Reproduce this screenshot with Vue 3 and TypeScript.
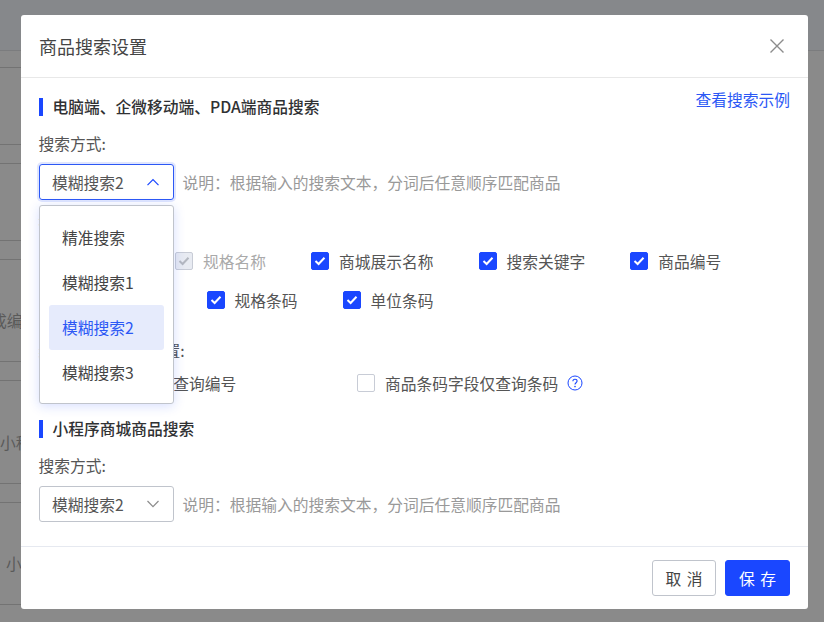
<script setup lang="ts">
interface BgRow {
  height: number
  text?: string
  offset?: number
}

interface CheckItem {
  label: string
  checked: boolean
  disabled?: boolean
}

const bgRows: BgRow[] = [
  { height: 17 },
  { height: 77 },
  { height: 19 },
  { height: 77 },
  { height: 19 },
  { height: 102, text: '成编码', offset: -9 },
  { height: 19 },
  { height: 103, text: '小程序', offset: 0 },
  { height: 19 },
  { height: 102, text: '小程序', offset: 6 },
]

const options = ['精准搜索', '模糊搜索1', '模糊搜索2', '模糊搜索3']
const description = '说明：根据输入的搜索文本，分词后任意顺序匹配商品'

const fields: CheckItem[] = [
  { label: '商品名称', checked: true, disabled: true },
  { label: '规格名称', checked: true, disabled: true },
  { label: '商城展示名称', checked: true },
  { label: '搜索关键字', checked: true },
  { label: '商品编号', checked: true },
  { label: '商品规格型号', checked: true },
  { label: '规格条码', checked: true },
  { label: '单位条码', checked: true },
]
</script>

<template>
  <div class="page">
    <div class="page-top"></div>
    <div class="page-table">
      <div
        v-for="(row, index) in bgRows"
        :key="index"
        class="page-row"
        :class="{ 'has-text': row.text }"
        :style="{ height: row.height + 'px' }"
      >
        <span v-if="row.text" :style="{ marginLeft: row.offset + 'px' }">{{ row.text }}</span>
      </div>
    </div>

    <div class="modal">
      <header class="modal-header">
        <span class="modal-title">商品搜索设置</span>
        <svg class="close" width="16" height="16" viewBox="0 0 16 16">
          <path d="M1.5 1.5 14.5 14.5M14.5 1.5 1.5 14.5" stroke="#8c8c8c" stroke-width="1.4" fill="none" />
        </svg>
      </header>

      <div class="modal-body">
        <div class="heading-row">
          <h3 class="heading">电脑端、企微移动端、PDA端商品搜索</h3>
          <a class="example-link">查看搜索示例</a>
        </div>

        <div class="form-label first">搜索方式:</div>
        <div class="select-row">
          <div class="select-wrap">
            <div class="select active">
              <span>模糊搜索2</span>
              <svg width="14" height="8" viewBox="0 0 14 8">
                <path d="M1.5 7.2 7 1.5l5.5 5.7" stroke="#1a47ff" stroke-width="1.2" fill="none" />
              </svg>
            </div>
            <ul class="dropdown">
              <li
                v-for="opt in options"
                :key="opt"
                class="option"
                :class="{ selected: opt === '模糊搜索2' }"
              >
                {{ opt }}
              </li>
            </ul>
          </div>
          <span class="desc">{{ description }}</span>
        </div>

        <div class="form-label fields-label">搜索字段:</div>
        <div class="check-group">
          <label
            v-for="item in fields"
            :key="item.label"
            class="check"
            :class="{ disabled: item.disabled }"
          >
            <span class="box on">
              <svg width="12" height="10" viewBox="0 0 12 10">
                <path d="M1.5 5 4.6 8 10.5 1.8" stroke="currentColor" stroke-width="2" fill="none" />
              </svg>
            </span>
            {{ item.label }}
          </label>
        </div>

        <div class="form-label rule-label">编号和条码查询设置:</div>
        <div class="rule-row">
          <label class="check rule-first">
            <span class="box"></span>
            商品编号字段仅查询编号
          </label>
          <label class="check">
            <span class="box"></span>
            商品条码字段仅查询条码
          </label>
          <svg class="help" width="16" height="16" viewBox="0 0 16 16">
            <circle cx="8" cy="8" r="7" stroke="#1a47ff" stroke-width="1" fill="none" />
            <path d="M5.9 6.2C5.9 5 6.8 4.2 8 4.2s2.1.8 2.1 1.9c0 1.7-2.1 1.6-2.1 3.4" stroke="#1a47ff" stroke-width="1.1" fill="none" />
            <circle cx="8" cy="11.6" r=".8" fill="#1a47ff" />
          </svg>
        </div>

        <h3 class="heading second">小程序商城商品搜索</h3>
        <div class="form-label first">搜索方式:</div>
        <div class="select-row">
          <div class="select">
            <span>模糊搜索2</span>
            <svg width="14" height="8" viewBox="0 0 14 8">
              <path d="M1.5 1 7 6.7 12.5 1" stroke="#8c8c8c" stroke-width="1.2" fill="none" />
            </svg>
          </div>
          <span class="desc">{{ description }}</span>
        </div>
      </div>

      <footer class="modal-footer">
        <button class="btn">取 消</button>
        <button class="btn primary">保 存</button>
      </footer>
    </div>
  </div>
</template>

<style>
html,
body {
  margin: 0;
  background: #8a8a8a;
}
</style>

<style scoped>
.page {
  position: relative;
  width: 824px;
  height: 622px;
  overflow: hidden;
  background: #8a8a8a;
  color: #333;
  font-family: "Noto Sans CJK SC", "Noto Sans", sans-serif;
  font-size: 15.75px;
}

.page-top {
  height: 51px;
  background: #86888b;
  border-bottom: 1px solid #7b7c7e;
  box-sizing: border-box;
}

.page-table {
  width: 120px;
}

.page-row {
  box-sizing: border-box;
  display: flex;
  align-items: center;
  border-bottom: 1px solid #737373;
  color: #5a5a5a;
  white-space: nowrap;
}

.page-row.has-text {
  padding-top: 20px;
}

.modal {
  position: absolute;
  left: 21px;
  top: 15px;
  width: 787px;
  height: 594px;
  display: flex;
  flex-direction: column;
  background: #fff;
  border-radius: 3px;
}

.modal-header {
  height: 63px;
  box-sizing: border-box;
  flex-shrink: 0;
  display: flex;
  align-items: center;
  justify-content: space-between;
  padding: 0 23px 0 18px;
  border-bottom: 1px solid #e8e8e8;
}

.modal-title {
  font-size: 18px;
  color: #444;
}

.modal-body {
  flex: 1;
  padding: 20px 18px 0;
  min-height: 0;
}

.heading-row {
  display: flex;
  justify-content: space-between;
  align-items: flex-start;
}

.heading {
  margin: 0;
  height: 18px;
  line-height: 18px;
  padding-left: 9.5px;
  border-left: 4px solid #1a47ff;
  font-size: 15.75px;
  font-weight: 500;
  color: #303133;
}

.heading.second {
  margin-top: 26px;
}

.example-link {
  margin-top: -9px;
  line-height: 22px;
  color: #2c58f5;
}

.form-label {
  height: 22px;
  line-height: 22px;
  color: #555;
  text-indent: -0.5px;
}

.form-label.first {
  margin-top: 17px;
}

.fields-label {
  margin-top: 12px;
}

.rule-label {
  margin-top: 29px;
}

.select-row {
  display: flex;
  align-items: center;
  gap: 9px;
  margin-top: 9px;
}

.select-wrap {
  position: relative;
}

.select {
  width: 135px;
  height: 36px;
  box-sizing: border-box;
  display: flex;
  align-items: center;
  justify-content: space-between;
  padding: 0 13px 0 12px;
  border: 1px solid #c0c4cc;
  border-radius: 3px;
  color: #555;
}

.select.active {
  border-color: #2c58f5;
  box-shadow: 0 0 0 2px rgba(44, 88, 245, 0.15);
}

.dropdown {
  position: absolute;
  z-index: 2;
  left: 0;
  top: 41px;
  width: 135px;
  height: 199px;
  box-sizing: border-box;
  margin: 0;
  padding: 9px;
  list-style: none;
  background: #fff;
  border: 1px solid #c0c4cc;
  border-radius: 3px;
  box-shadow: 0 2px 12px rgba(26, 71, 255, 0.18);
}

.option {
  height: 45px;
  line-height: 45px;
  padding-left: 13px;
  border-radius: 3px;
  color: #444;
}

.option.selected {
  background: #e6ebfc;
  color: #2c58f5;
}

.desc {
  color: #999;
  margin-left: -0.5px;
}

.check-group {
  display: flex;
  flex-wrap: wrap;
  column-gap: 45px;
  row-gap: 17px;
  margin-top: 16px;
}

.check {
  display: flex;
  align-items: center;
  gap: 10px;
  height: 22px;
  color: #555;
}

.check.disabled {
  color: #aaa;
}

.box {
  width: 18px;
  height: 18px;
  box-sizing: border-box;
  display: flex;
  align-items: center;
  justify-content: center;
  border: 1px solid #c8ccd6;
  border-radius: 2px;
  background: #fff;
}

.box.on {
  border-color: #1a47ff;
  background: #1a47ff;
  color: #fff;
}

.disabled .box.on {
  border-color: #c8ccd6;
  background: #e8ebf2;
  color: #b4b8c0;
}

.rule-row {
  display: flex;
  align-items: center;
  margin-top: 10px;
}

.rule-first {
  width: 318px;
  gap: 6px;
}

.help {
  margin-left: 9px;
}

.modal-footer {
  height: 63px;
  box-sizing: border-box;
  flex-shrink: 0;
  display: flex;
  justify-content: flex-end;
  align-items: center;
  gap: 9px;
  padding: 0 18px;
  border-top: 1px solid #e6e9f0;
}

.btn {
  width: 64px;
  height: 36px;
  padding: 0;
  border: 1px solid #c0c4cc;
  border-radius: 3px;
  background: #fff;
  color: #444;
  font-family: inherit;
  font-size: 15.75px;
  word-spacing: 2px;
}

.btn.primary {
  width: 65px;
  border-color: #1a47ff;
  background: #1a47ff;
  color: #fff;
}
</style>
